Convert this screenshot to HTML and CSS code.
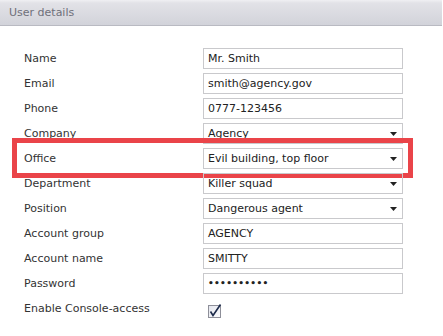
FILE: index.html
```html
<!DOCTYPE html>
<html lang="en">
<head>
    <meta charset="UTF-8">
    <title>User details</title>
    <link rel="stylesheet" href="styles.css">
</head>
<body>
    <div class="panel">
        <div class="panel-header">User details</div>
        <div class="form">
            <div class="row">
                <span class="label">Name</span>
                <div class="field">Mr. Smith</div>
            </div>
            <div class="row">
                <span class="label">Email</span>
                <div class="field">smith@agency.gov</div>
            </div>
            <div class="row">
                <span class="label">Phone</span>
                <div class="field">0777-123456</div>
            </div>
            <div class="row">
                <span class="label">Company</span>
                <div class="field select">Agency
                    <svg class="arrow" width="7" height="4" viewBox="0 0 7 4"><path d="M0 0h7L3.5 4z" fill="#222"/></svg>
                </div>
            </div>
            <div class="row highlighted">
                <span class="label">Office</span>
                <div class="field select">Evil building, top floor
                    <svg class="arrow" width="7" height="4" viewBox="0 0 7 4"><path d="M0 0h7L3.5 4z" fill="#222"/></svg>
                </div>
                <div class="highlight"></div>
            </div>
            <div class="row">
                <span class="label">Department</span>
                <div class="field select">Killer squad
                    <svg class="arrow" width="7" height="4" viewBox="0 0 7 4"><path d="M0 0h7L3.5 4z" fill="#222"/></svg>
                </div>
            </div>
            <div class="row">
                <span class="label">Position</span>
                <div class="field select">Dangerous agent
                    <svg class="arrow" width="7" height="4" viewBox="0 0 7 4"><path d="M0 0h7L3.5 4z" fill="#222"/></svg>
                </div>
            </div>
            <div class="row">
                <span class="label">Account group</span>
                <div class="field">AGENCY</div>
            </div>
            <div class="row">
                <span class="label">Account name</span>
                <div class="field">SMITTY</div>
            </div>
            <div class="row">
                <span class="label">Password</span>
                <div class="field password">&bull;&bull;&bull;&bull;&bull;&bull;&bull;&bull;&bull;&bull;</div>
            </div>
            <div class="row">
                <span class="label">Enable Console-access</span>
                <svg class="checkbox" width="14" height="14" viewBox="0 0 14 14">
                    <defs>
                        <linearGradient id="cb" x1="0" y1="0" x2="1" y2="1">
                            <stop offset="0" stop-color="#e4e6ee"/>
                            <stop offset="1" stop-color="#fbfbfd"/>
                        </linearGradient>
                    </defs>
                    <rect x="0.5" y="1.5" width="12" height="12" fill="url(#cb)" stroke="#8e8f99"/>
                    <path d="M2.5 7.5 L5 11.5 L12.5 0.5" fill="none" stroke="#1c2a4a" stroke-width="1.6"/>
                </svg>
            </div>
        </div>
    </div>
</body>
</html>
```

FILE: styles.css
```css
body {
    margin: 0;
    font-family: "DejaVu Sans", Verdana, sans-serif;
    font-size: 11px;
    color: #333;
    background-color: #fff;
}
.panel {
    width: 442px;
}
.panel-header {
    height: 25px;
    line-height: 25px;
    padding-left: 9px;
    color: #6f707a;
    background: linear-gradient(#f0f0f3 0, #e2e2e7 3px, #d2d3da 100%);
    border-bottom: 1px solid #b9bac2;
}
.form {
    display: flex;
    flex-direction: column;
    gap: 4px;
    padding: 22px 0 0 24px;
}
.row {
    position: relative;
    display: flex;
    align-items: center;
    height: 21px;
}
.label {
    width: 179px;
    color: #333;
}
.field {
    position: relative;
    box-sizing: border-box;
    width: 200px;
    height: 21px;
    line-height: 19px;
    padding-left: 4px;
    border: 1px solid #c9c9cc;
    color: #222;
    white-space: nowrap;
}
.select .arrow {
    position: absolute;
    right: 5px;
    top: 8px;
}
.password {
    font-size: 9px;
    font-weight: bold;
    letter-spacing: 0.3px;
}
.checkbox {
    margin: 5px 0 0 5px;
}
.highlight {
    position: absolute;
    left: -12px;
    top: -10px;
    width: 401px;
    height: 40px;
    box-sizing: border-box;
    border: 5px solid #ea4449;
}
```
